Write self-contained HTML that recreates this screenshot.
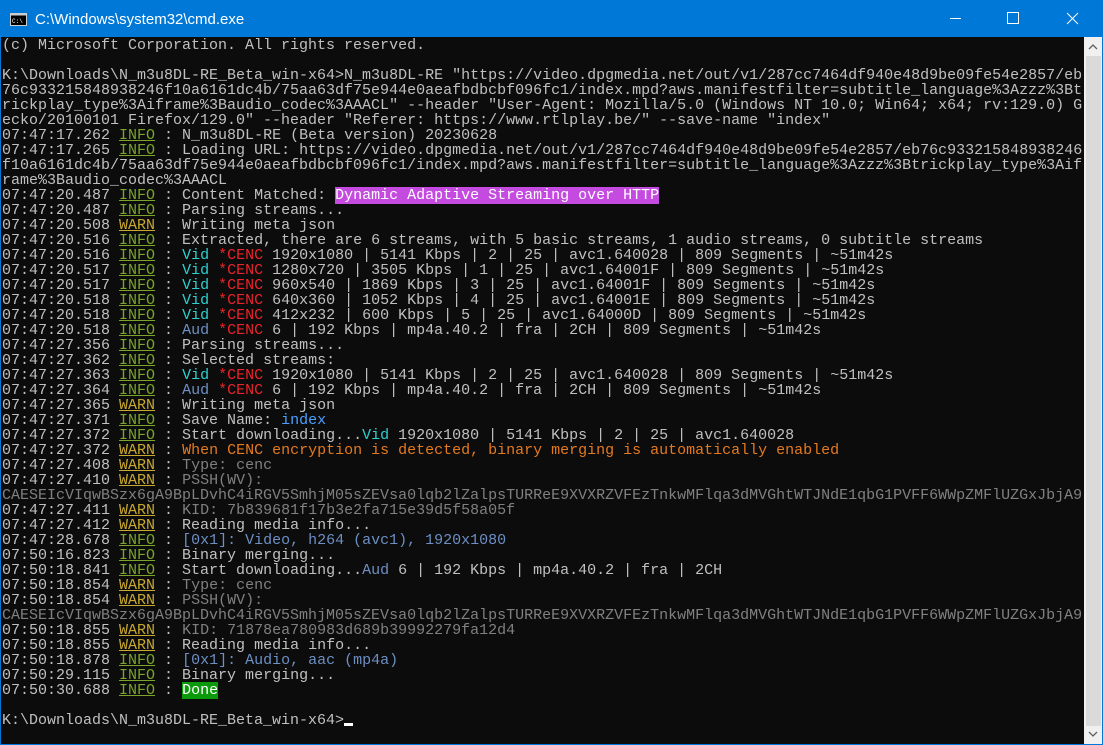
<!DOCTYPE html>
<html><head><meta charset="utf-8"><style>
html,body{margin:0;padding:0;width:1103px;height:745px;overflow:hidden;background:#000}
#tb{position:absolute;left:0;top:0;width:1103px;height:37px;background:#0078d7;color:#fff;font:15px "Liberation Sans",sans-serif}
#tb .t{position:absolute;left:35px;top:11px}
#con{position:absolute;left:1px;top:37px;width:1083px;height:707px;overflow:hidden;background:#0c0c0c}
pre{margin:0;padding-left:1px;padding-top:1px;font:15px/15px "Liberation Mono",monospace;color:#c0c0c0;white-space:pre}
.i{color:#7aa42a;text-decoration:underline}
.w{color:#c8a830;text-decoration:underline}
.v{color:#2ed0d0}.c{color:#e8242a}.d{color:#808080}.b{color:#6d8fc4}.o{color:#e47a20}.n{color:#4aa0ff}
.m{background:#c44ae0;color:#fff}.g{background:#0a9a0a;color:#fff}
#lb{position:absolute;left:0;top:37px;width:1px;height:708px;background:#0078d7}
#rb{position:absolute;right:0;top:37px;width:1px;height:708px;background:#0078d7}
#bb{position:absolute;left:0;top:744px;width:1103px;height:1px;background:#0078d7}
#sb{position:absolute;left:1084px;top:37px;width:18px;height:707px;background:#f0f0f0}
#th{position:absolute;left:1086px;top:56px;width:15px;height:670px;background:#dadada}
</style></head><body>
<div id="tb">
<svg style="position:absolute;left:10px;top:13px" width="18" height="13"><rect x="0.5" y="0.5" width="16" height="12" fill="#000" stroke="#ccc"/><rect x="0.5" y="0.5" width="16" height="2" fill="#ccc"/><text x="2" y="10" fill="#fff" font-size="6" font-family="Liberation Mono">C:\</text></svg>
<span class="t">C:\Windows\system32\cmd.exe</span>
<svg style="position:absolute;left:950px;top:0" width="153" height="37" stroke="#fff" stroke-width="1" fill="none"><line x1="0" y1="18.5" x2="11" y2="18.5"/><rect x="57.5" y="12.5" width="11" height="11"/><path d="M117 13 L128 24 M128 13 L117 24"/></svg>
</div>
<div id="con"><pre>(c) Microsoft Corporation. All rights reserved.

K:\Downloads\N_m3u8DL-RE_Beta_win-x64>N_m3u8DL-RE "https://video.dpgmedia.net/out/v1/287cc7464df940e48d9be09fe54e2857/eb
76c933215848938246f10a6161dc4b/75aa63df75e944e0aeafbdbcbf096fc1/index.mpd?aws.manifestfilter=subtitle_language%3Azzz%3Bt
rickplay_type%3Aiframe%3Baudio_codec%3AAACL" --header "User-Agent: Mozilla/5.0 (Windows NT 10.0; Win64; x64; rv:129.0) G
ecko/20100101 Firefox/129.0" --header "Referer: https://www.rtlplay.be/" --save-name "index"
07:47:17.262 <span class="i">INFO</span> : N_m3u8DL-RE (Beta version) 20230628
07:47:17.265 <span class="i">INFO</span> : Loading URL: https://video.dpgmedia.net/out/v1/287cc7464df940e48d9be09fe54e2857/eb76c933215848938246
f10a6161dc4b/75aa63df75e944e0aeafbdbcbf096fc1/index.mpd?aws.manifestfilter=subtitle_language%3Azzz%3Btrickplay_type%3Aif
rame%3Baudio_codec%3AAACL
07:47:20.487 <span class="i">INFO</span> : Content Matched: <span class="m">Dynamic Adaptive Streaming over HTTP</span>
07:47:20.487 <span class="i">INFO</span> : Parsing streams...
07:47:20.508 <span class="w">WARN</span> : Writing meta json
07:47:20.516 <span class="i">INFO</span> : Extracted, there are 6 streams, with 5 basic streams, 1 audio streams, 0 subtitle streams
07:47:20.516 <span class="i">INFO</span> : <span class="v">Vid</span> <span class="c">*CENC</span> 1920x1080 | 5141 Kbps | 2 | 25 | avc1.640028 | 809 Segments | ~51m42s
07:47:20.517 <span class="i">INFO</span> : <span class="v">Vid</span> <span class="c">*CENC</span> 1280x720 | 3505 Kbps | 1 | 25 | avc1.64001F | 809 Segments | ~51m42s
07:47:20.517 <span class="i">INFO</span> : <span class="v">Vid</span> <span class="c">*CENC</span> 960x540 | 1869 Kbps | 3 | 25 | avc1.64001F | 809 Segments | ~51m42s
07:47:20.518 <span class="i">INFO</span> : <span class="v">Vid</span> <span class="c">*CENC</span> 640x360 | 1052 Kbps | 4 | 25 | avc1.64001E | 809 Segments | ~51m42s
07:47:20.518 <span class="i">INFO</span> : <span class="v">Vid</span> <span class="c">*CENC</span> 412x232 | 600 Kbps | 5 | 25 | avc1.64000D | 809 Segments | ~51m42s
07:47:20.518 <span class="i">INFO</span> : <span class="b">Aud</span> <span class="c">*CENC</span> 6 | 192 Kbps | mp4a.40.2 | fra | 2CH | 809 Segments | ~51m42s
07:47:27.356 <span class="i">INFO</span> : Parsing streams...
07:47:27.362 <span class="i">INFO</span> : Selected streams:
07:47:27.363 <span class="i">INFO</span> : <span class="v">Vid</span> <span class="c">*CENC</span> 1920x1080 | 5141 Kbps | 2 | 25 | avc1.640028 | 809 Segments | ~51m42s
07:47:27.364 <span class="i">INFO</span> : <span class="b">Aud</span> <span class="c">*CENC</span> 6 | 192 Kbps | mp4a.40.2 | fra | 2CH | 809 Segments | ~51m42s
07:47:27.365 <span class="w">WARN</span> : Writing meta json
07:47:27.371 <span class="i">INFO</span> : Save Name: <span class="n">index</span>
07:47:27.372 <span class="i">INFO</span> : Start downloading...<span class="v">Vid</span> 1920x1080 | 5141 Kbps | 2 | 25 | avc1.640028
07:47:27.372 <span class="w">WARN</span> : <span class="o">When CENC encryption is detected, binary merging is automatically enabled</span>
07:47:27.408 <span class="w">WARN</span> : <span class="d">Type: cenc</span>
07:47:27.410 <span class="w">WARN</span> : <span class="d">PSSH(WV):</span>
<span class="d">CAESEIcVIqwBSzx6gA9BpLDvhC4iRGV5SmhjM05sZEVsa0lqb2lZalpsTURReE9XVXRZVFEzTnkwMFlqa3dMVGhtWTJNdE1qbG1PVFF6WWpZMFlUZGxJbjA9</span>
07:47:27.411 <span class="w">WARN</span> : <span class="d">KID: 7b839681f17b3e2fa715e39d5f58a05f</span>
07:47:27.412 <span class="w">WARN</span> : Reading media info...
07:47:28.678 <span class="i">INFO</span> : <span class="b">[0x1]: Video, h264 (avc1), 1920x1080</span>
07:50:16.823 <span class="i">INFO</span> : Binary merging...
07:50:18.841 <span class="i">INFO</span> : Start downloading...<span class="b">Aud</span> 6 | 192 Kbps | mp4a.40.2 | fra | 2CH
07:50:18.854 <span class="w">WARN</span> : <span class="d">Type: cenc</span>
07:50:18.854 <span class="w">WARN</span> : <span class="d">PSSH(WV):</span>
<span class="d">CAESEIcVIqwBSzx6gA9BpLDvhC4iRGV5SmhjM05sZEVsa0lqb2lZalpsTURReE9XVXRZVFEzTnkwMFlqa3dMVGhtWTJNdE1qbG1PVFF6WWpZMFlUZGxJbjA9</span>
07:50:18.855 <span class="w">WARN</span> : <span class="d">KID: 71878ea780983d689b39992279fa12d4</span>
07:50:18.855 <span class="w">WARN</span> : Reading media info...
07:50:18.878 <span class="i">INFO</span> : <span class="b">[0x1]: Audio, aac (mp4a)</span>
07:50:29.115 <span class="i">INFO</span> : Binary merging...
07:50:30.688 <span class="i">INFO</span> : <span class="g">Done</span>

K:\Downloads\N_m3u8DL-RE_Beta_win-x64><span style="display:inline-block;width:9px;height:3px;background:#fff;vertical-align:-2px"></span></pre></div>
<div id="sb"></div><div id="th"></div>
<svg style="position:absolute;left:1084px;top:40px" width="18" height="14"><path d="M5 9 L9 5 L13 9" stroke="#606060" stroke-width="1.3" fill="none"/></svg>
<svg style="position:absolute;left:1084px;top:727px" width="18" height="14"><path d="M5 5 L9 9 L13 5" stroke="#606060" stroke-width="1.3" fill="none"/></svg>
<div id="lb"></div><div id="rb"></div><div id="bb"></div>
</body></html>
